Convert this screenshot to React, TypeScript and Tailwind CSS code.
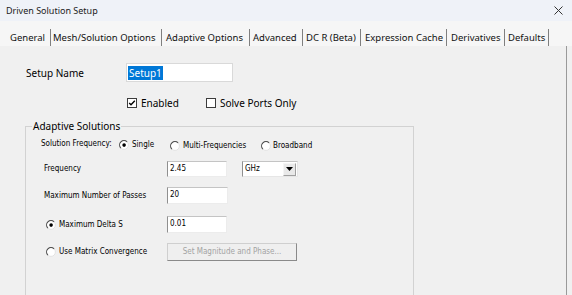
import React from "react";

const Radio = ({ checked }: { checked?: boolean }) => (
  <svg width="10" height="10" viewBox="0 0 10 10" className="shrink-0">
    <circle cx="5" cy="5" r="4.3" fill="#fff" />
    <path d="M1.9 8.1 A4.3 4.3 0 0 1 8.1 1.9" stroke="#4a4a4a" strokeWidth="1.1" fill="none" />
    <path d="M8.1 1.9 A4.3 4.3 0 0 1 1.9 8.1" stroke="#e3e3e3" strokeWidth="1" fill="none" />
    {checked && <circle cx="5.1" cy="5.1" r="1.8" fill="#000" />}
  </svg>
);

const Check = ({ checked }: { checked?: boolean }) => (
  <span className="w-[10px] h-[10px] shrink-0 border border-[#3c3c3c] bg-white flex items-center justify-center">
    {checked && (
      <svg width="8" height="8" viewBox="0 0 8 8">
        <path d="M1.2 4 L3 5.8 L6.8 1.8" stroke="#000" strokeWidth="1.4" fill="none" />
      </svg>
    )}
  </span>
);

const tabs: { label: string; w: string; pl: string }[] = [
  { label: "General", w: "w-[43px]", pl: "pl-[2px]" },
  { label: "Mesh/Solution Options", w: "w-[111px]", pl: "pl-[2px]" },
  { label: "Adaptive Options", w: "w-[88px]", pl: "pl-[4px]" },
  { label: "Advanced", w: "w-[53px]", pl: "pl-[3px]" },
  { label: "DC R (Beta)", w: "w-[58px]", pl: "pl-[3px]" },
  { label: "Expression Cache", w: "w-[86px]", pl: "pl-[4px]" },
  { label: "Derivatives", w: "w-[58px]", pl: "pl-[4px]" },
  { label: "Defaults", w: "w-[44px]", pl: "pl-[3px]" },
];

const small = "font-['DejaVu_Sans_Condensed','Liberation_Sans',Arial,sans-serif] text-[8px] text-black";

const Field = ({ value, w, h }: { value: string; w: string; h: string }) => (
  <div
    className={`${w} ${h} bg-white border-t border-l border-t-[#c4c4c4] border-l-[#8f8f8f] border-r border-b border-r-[#ececec] border-b-[#ececec] pl-[2px] pt-[1px] leading-[11px] ${small}`}
  >
    {value}
  </div>
);

export default function App() {
  return (
    <div className="w-[572px] h-[295px] bg-[#f0f0f0] flex flex-col overflow-hidden font-['Noto_Sans',sans-serif] text-black">
      {/* Title bar */}
      <div className="h-[21px] shrink-0 bg-[#eff2f8] flex items-center justify-between pl-[6px] pr-[9px]">
        <span className="text-[9px] text-[#1b1b1b] leading-none">Driven Solution Setup</span>
        <svg width="9" height="9" viewBox="0 0 9 9">
          <path d="M0.5 0.5 L8.5 8.5 M8.5 0.5 L0.5 8.5" stroke="#333" strokeWidth="1" />
        </svg>
      </div>

      {/* Tabs */}
      <div className="h-[25px] shrink-0 bg-[#f6f6f6] flex items-end pl-[8px]">
        {tabs.map((t) => (
          <div
            key={t.label}
            className={`${t.w} ${t.pl} h-[17px] shrink-0 flex items-center border-r border-[#7f7f7f] text-[9.5px] leading-none whitespace-nowrap text-[#111]`}
          >
            {t.label}
          </div>
        ))}
      </div>

      {/* Panel */}
      <div className="flex-1 min-h-0 overflow-hidden mr-[5px] border-r border-[#9a9a9a] flex flex-col">
        <div className="flex items-center mt-[17px] h-[19px]">
          <span className="w-[126px] pl-[26px] text-[10px] leading-none">Setup Name</span>
          <div className="w-[107px] h-[19px] bg-white border border-[#d9d9d9] flex items-center pl-[1px]">
            <span className="bg-[#0078d7] text-white text-[10px] leading-[14px] px-[1px]">Setup1</span>
          </div>
        </div>

        <div className="flex items-center mt-[16px] h-[10px] pl-[127px] text-[10px] leading-none">
          <div className="flex items-center gap-[4px] w-[79px]">
            <Check checked />
            <span>Enabled</span>
          </div>
          <div className="flex items-center gap-[4px]">
            <Check />
            <span>Solve Ports Only</span>
          </div>
        </div>

        <fieldset className="ml-[25px] w-[389px] mt-[12px] h-[220px] shrink-0 border border-[#d2d2d2]">
          <legend className="ml-[6px] px-[1px] text-[10px] leading-[13px]">Adaptive Solutions</legend>

          {/* Solution Frequency */}
          <div className={`flex items-start h-[12px] mt-[6px] ${small}`}>
            <span className="w-[93px] pl-[15px] leading-[10px]">Solution Frequency:</span>
            <div className="w-[51px] flex items-center gap-[3px] mt-[1px]">
              <Radio checked />
              <span className="leading-[10px]">Single</span>
            </div>
            <div className="w-[91px] flex items-center gap-[3px] mt-[2px]">
              <Radio />
              <span className="leading-[10px]">Multi-Frequencies</span>
            </div>
            <div className="flex items-center gap-[2px] mt-[2px]">
              <Radio />
              <span className="leading-[10px]">Broadband</span>
            </div>
          </div>

          {/* Frequency */}
          <div className={`flex items-center h-[16px] mt-[10px] ${small}`}>
            <span className="w-[141px] pl-[18px]">Frequency</span>
            <Field value="2.45" w="w-[60px]" h="h-[16px]" />
            <div className="ml-[15px] w-[56px] h-[16px] bg-white border-l border-t border-l-[#8f8f8f] border-t-[#c4c4c4] border-r border-b border-r-[#e6e6e6] border-b-[#e6e6e6] flex items-center">
              <span className="flex-1 pl-[2px] leading-none">GHz</span>
              <div className="w-[13px] h-[13px] mr-[1px] bg-[#e9e9e9] border border-[#a0a0a0] border-t-[#f5f5f5] border-l-[#f5f5f5] flex items-center justify-center">
                <svg width="7" height="4" viewBox="0 0 7 4">
                  <path d="M0 0 L7 0 L3.5 4 Z" fill="#000" />
                </svg>
              </div>
            </div>
          </div>

          {/* Max passes */}
          <div className={`flex items-center h-[17px] mt-[10px] ${small}`}>
            <span className="w-[141px] pl-[18px]">Maximum Number of Passes</span>
            <Field value="20" w="w-[61px]" h="h-[17px]" />
          </div>

          {/* Max Delta S */}
          <div className={`flex items-center h-[17px] mt-[12px] ${small}`}>
            <div className="w-[141px] pl-[20px] flex items-center gap-[3px]">
              <Radio checked />
              <span>Maximum Delta S</span>
            </div>
            <Field value="0.01" w="w-[60px]" h="h-[17px]" />
          </div>

          {/* Matrix convergence */}
          <div className={`flex items-center h-[18px] mt-[10px] ${small}`}>
            <div className="w-[141px] pl-[20px] flex items-center gap-[3px]">
              <Radio />
              <span>Use Matrix Convergence</span>
            </div>
            <div className="w-[130px] h-[18px] bg-[#efefef] border border-[#cfcfcf] border-r-[#8a8a8a] border-b-[#8a8a8a] flex items-center justify-center text-[#a3a3a3]">
              Set Magnitude and Phase...
            </div>
          </div>
        </fieldset>
      </div>
    </div>
  );
}
